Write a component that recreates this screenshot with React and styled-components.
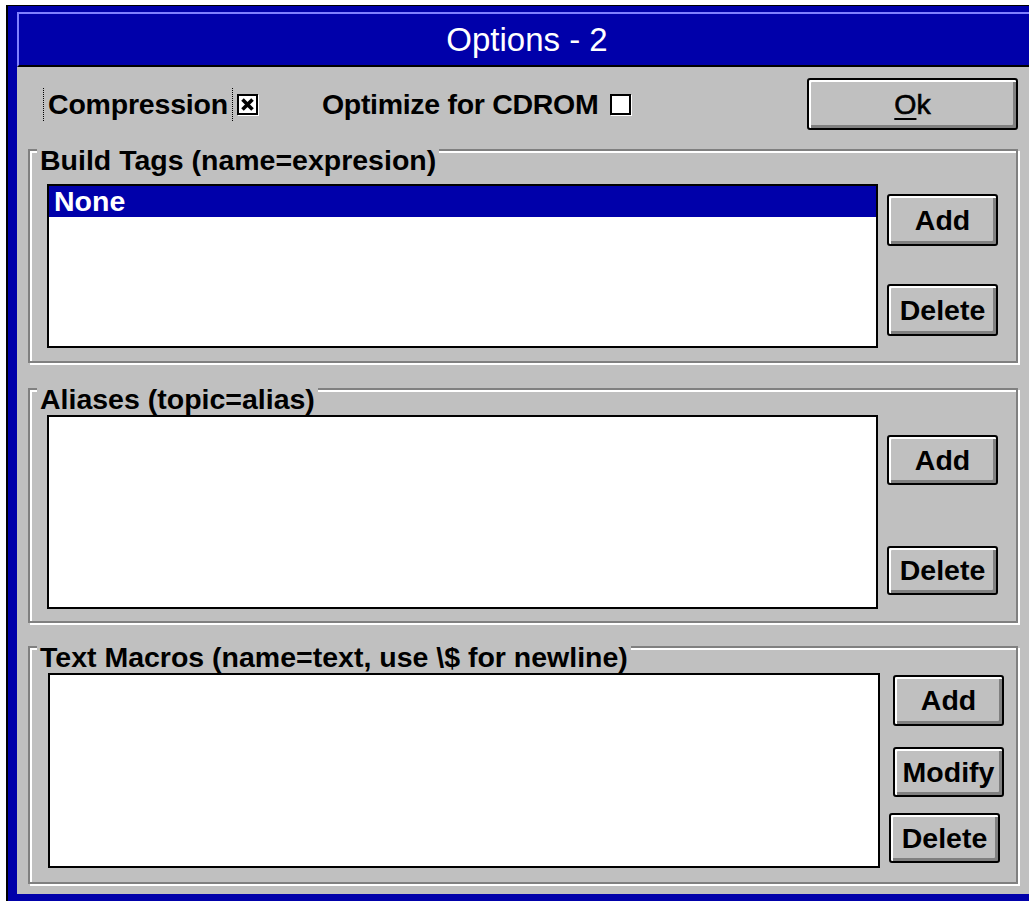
import styled, { createGlobalStyle } from "styled-components";

const GlobalStyle = createGlobalStyle`
  html, body {
    margin: 0;
    padding: 0;
    overflow: hidden;
    background: #fff;
  }
  body {
    width: 1029px;
    font-family: "Liberation Sans", Arial, sans-serif;
  }
`;

const Window = styled.div`
  width: 1046px;
  margin: 5px 0 0 6px;
  box-sizing: border-box;
  border: 2px solid #000;
  border-top-width: 1px;
  background: #0000aa;
  padding: 6px 9px 9px 9px;
`;

const TitleBar = styled.div`
  height: 51px;
  border-top: 2px solid #8080ff;
  border-left: 2px solid #8080ff;
  border-bottom: 2px solid #000;
  display: flex;
  align-items: center;
  justify-content: center;
  padding-right: 6px;
  color: #fff;
  font-size: 33px;
`;

const Body = styled.div`
  background: #c0c0c0;
  padding: 11px 0 10px 11px;
  display: flex;
  flex-direction: column;
  color: #000;
  font-weight: bold;
  font-size: 28.5px;
`;

const TopRow = styled.div`
  width: 990px;
  height: 52px;
  box-sizing: border-box;
  padding-left: 15px;
  display: flex;
  align-items: center;
`;

const FocusLabel = styled.span`
  display: flex;
  align-items: center;
  height: 33px;
  padding: 0 4px;
  border-left: 1px dotted #000;
  border-right: 1px dotted #000;
  letter-spacing: -0.2px;
`;

const Label = styled.span`
  margin-left: ${(p) => p.$gap || 0}px;
  letter-spacing: -0.3px;
`;

const CheckBox = styled.span`
  width: 21px;
  height: 21px;
  box-sizing: border-box;
  margin-left: ${(p) => p.$gap}px;
  background: #fff;
  border: 2px solid #000;
  box-shadow: 1px 1px 0 #fff;
  display: flex;
  align-items: center;
  justify-content: center;
`;

const Button = styled.button`
  width: ${(p) => p.$w || 111}px;
  height: ${(p) => p.$h}px;
  margin-left: ${(p) => p.$shift || 0}px;
  box-sizing: border-box;
  padding: 0;
  background: #c0c0c0;
  border: 2px solid #000;
  border-radius: 3px;
  box-shadow: inset 2px 2px 0 #fff, inset -3px -3px 0 #808080;
  font-family: inherit;
  font-weight: bold;
  font-size: 28.5px;
  color: #000;
  display: flex;
  align-items: center;
  justify-content: center;
`;

const OkButton = styled(Button)`
  margin-left: auto;
  font-weight: normal;
  -webkit-text-stroke: 0.6px #000;

  u {
    text-decoration-thickness: 2px;
    text-underline-offset: 4px;
  }
`;

const Group = styled.div`
  position: relative;
  width: 990px;
  box-sizing: border-box;
  margin-top: ${(p) => p.$top}px;
  padding: ${(p) => p.$pad};
  border: 2px solid #808080;
  box-shadow: inset 2px 2px 0 #fff, 2px 2px 0 #fff;
  display: flex;
  align-items: flex-start;
`;

const GroupTitle = styled.span`
  position: absolute;
  top: -7px;
  left: 7px;
  padding: 0 3px;
  line-height: 32px;
  background: #c0c0c0;
  white-space: nowrap;
`;

const ListBox = styled.div`
  width: ${(p) => p.$w}px;
  height: ${(p) => p.$h}px;
  box-sizing: border-box;
  background: #fff;
  border: 2px solid #000;
`;

const ListItem = styled.div`
  height: 31px;
  line-height: 31px;
  padding-left: 5px;
  background: ${(p) => (p.$selected ? "#0000aa" : "transparent")};
  color: ${(p) => (p.$selected ? "#fff" : "#000")};
`;

const ButtonStack = styled.div`
  display: flex;
  flex-direction: column;
  gap: ${(p) => p.$gap}px;
  margin-left: ${(p) => p.$left}px;
  padding-top: ${(p) => p.$top}px;
`;

const MacroStack = styled.div`
  display: flex;
  flex-direction: column;
  margin-left: 13px;
  padding-top: 2px;

  & > :nth-child(2) {
    margin-top: 21px;
  }
  & > :nth-child(3) {
    margin-top: 16px;
  }
`;

const Cross = () => (
  <svg width="15" height="15" viewBox="0 0 15 15">
    <path d="M2.5 2.5 L12.5 12.5 M12.5 2.5 L2.5 12.5" stroke="#000" strokeWidth="3.6" />
  </svg>
);

export default function App() {
  return (
    <>
      <GlobalStyle />
      <Window>
        <TitleBar>Options - 2</TitleBar>
        <Body>
          <TopRow>
            <FocusLabel>Compression</FocusLabel>
            <CheckBox $gap={4}>
              <Cross />
            </CheckBox>
            <Label $gap={64}>Optimize for CDROM</Label>
            <CheckBox $gap={12} />
            <OkButton $w={211} $h={52}>
              <span>
                <u>O</u>k
              </span>
            </OkButton>
          </TopRow>

          <Group $top={19} $pad="33px 0 13px 17px">
            <GroupTitle>Build Tags (name=expresion)</GroupTitle>
            <ListBox $w={831} $h={164}>
              <ListItem $selected>None</ListItem>
            </ListBox>
            <ButtonStack $left={9} $top={10} $gap={38}>
              <Button $h={52}>Add</Button>
              <Button $h={52}>Delete</Button>
            </ButtonStack>
          </Group>

          <Group $top={25} $pad="25px 0 12px 17px">
            <GroupTitle>Aliases (topic=alias)</GroupTitle>
            <ListBox $w={831} $h={194} />
            <ButtonStack $left={9} $top={20} $gap={61}>
              <Button $h={50}>Add</Button>
              <Button $h={49}>Delete</Button>
            </ButtonStack>
          </Group>

          <Group $top={23} $pad="25px 0 14px 18px">
            <GroupTitle>Text Macros (name=text, use \$ for newline)</GroupTitle>
            <ListBox $w={832} $h={195} />
            <MacroStack>
              <Button $h={51}>Add</Button>
              <Button $h={50}>Modify</Button>
              <Button $h={50} $shift={-4}>
                Delete
              </Button>
            </MacroStack>
          </Group>
        </Body>
      </Window>
    </>
  );
}
